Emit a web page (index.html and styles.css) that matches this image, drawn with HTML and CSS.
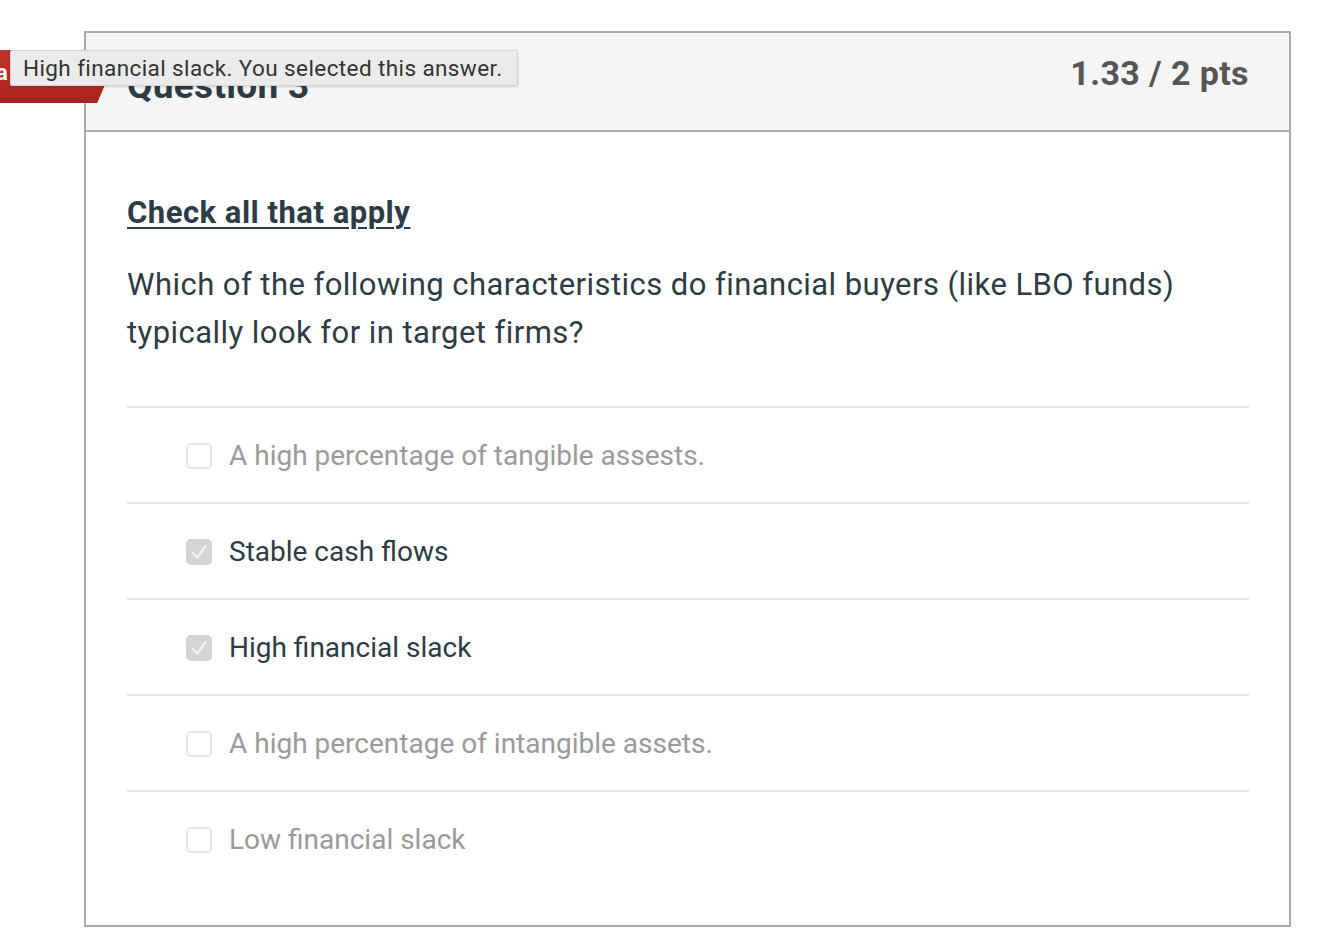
FILE: index.html
```html
<!DOCTYPE html>
<html>
<head>
<meta charset="utf-8">
<link rel="stylesheet" href="styles.css">
</head>
<body>
<div class="page">
  <div class="card">
    <div class="card-header">
      <h2 class="q-title">Question 3</h2>
      <div class="q-points">1.33 / 2 pts</div>
    </div>
    <div class="card-body">
      <p class="instruction">Check all that apply</p>
      <p class="q-text">Which of the following characteristics do financial buyers (like LBO funds) typically look for in target firms?</p>
      <ul class="answers">
        <li class="answer"><span class="box"></span><span class="label muted">A high percentage of tangible assests.</span></li>
        <li class="answer"><span class="box checked"><svg viewBox="0 0 26 26" width="26" height="26"><path d="M6.5 13.5 L11 18.5 L19.5 7.5" fill="none" stroke="#f2f2f2" stroke-width="2.6" stroke-linecap="round" stroke-linejoin="round"/></svg></span><span class="label">Stable cash flows</span></li>
        <li class="answer"><span class="box checked"><svg viewBox="0 0 26 26" width="26" height="26"><path d="M6.5 13.5 L11 18.5 L19.5 7.5" fill="none" stroke="#f2f2f2" stroke-width="2.6" stroke-linecap="round" stroke-linejoin="round"/></svg></span><span class="label">High financial slack</span></li>
        <li class="answer"><span class="box"></span><span class="label muted">A high percentage of intangible assets.</span></li>
        <li class="answer"><span class="box"></span><span class="label muted">Low financial slack</span></li>
      </ul>
    </div>
  </div>
  <div class="tag"><span class="tag-text">a</span></div>
  <div class="tooltip">High financial slack. You selected this answer.</div>
</div>
</body>
</html>
```
FILE: styles.css
```css
html, body {
  margin: 0;
  padding: 0;
  background: #ffffff;
}
body {
  font-family: Roboto, "Liberation Sans", Arial, sans-serif;
  color: #2d3b45;
}
.page {
  position: relative;
  width: 1342px;
  height: 934px;
  overflow: hidden;
  padding-top: 31px;
  box-sizing: border-box;
}
.card {
  margin-left: 84px;
  width: 1207px;
  height: 896px;
  box-sizing: border-box;
  border: 2px solid #a9a9a9;
  background: #ffffff;
}
.card-header {
  height: 99px;
  box-sizing: border-box;
  background: #f5f5f5;
  border-bottom: 2px solid #b0b0b0;
  display: flex;
  justify-content: space-between;
  align-items: flex-start;
  padding: 0 40px 0 41px;
}
.q-title {
  margin: 0;
  padding-top: 31px;
  font-size: 37px;
  font-weight: 700;
  line-height: 44px;
  letter-spacing: 0.3px;
  color: #2d3b45;
}
.q-points {
  padding-top: 20px;
  font-size: 34px;
  font-weight: 700;
  line-height: 40px;
  letter-spacing: 0.4px;
  color: #555555;
}
.card-body {
  padding: 0 40px 0 41px;
}
.instruction {
  margin: 0;
  padding-top: 61px;
  font-size: 31px;
  font-weight: 700;
  line-height: 40px;
  letter-spacing: 0.5px;
  text-decoration: underline;
  text-decoration-thickness: 2px;
  text-underline-offset: 4px;
  color: #2d3b45;
}
.q-text {
  margin: 28px 0 0 0;
  font-size: 31px;
  line-height: 48px;
  letter-spacing: 0.45px;
  color: #2d3b45;
}
.answers {
  list-style: none;
  margin: 49px 0 0 0;
  padding: 0;
}
.answer {
  height: 96px;
  box-sizing: border-box;
  border-top: 2px solid #e6e6e6;
  display: flex;
  align-items: center;
  padding-left: 59px;
  padding-top: 2px;
}
.box {
  width: 26px;
  height: 26px;
  box-sizing: border-box;
  border: 2px solid #e8e8e8;
  border-radius: 5px;
  background: #ffffff;
  margin-right: 17px;
  display: flex;
  align-items: center;
  justify-content: center;
}
.box.checked {
  background: #d4d4d4;
  border-color: #d4d4d4;
}
.box svg {
  display: block;
  flex: none;
}
.label {
  font-size: 28px;
  line-height: 34px;
  color: #2d3b45;
}
.label.muted {
  color: #9a9a9a;
}
.tag {
  position: absolute;
  left: 0;
  top: 50px;
  width: 120px;
  height: 53px;
  background: linear-gradient(#c0342c, #a8231d);
  clip-path: polygon(0 0, 100% 0, 81% 100%, 0 100%);
}
.tag-text {
  position: absolute;
  left: -4px;
  top: 10px;
  color: #ffffff;
  font-size: 22px;
  font-weight: 700;
}
.tooltip {
  position: absolute;
  left: 10px;
  top: 50px;
  width: 508px;
  height: 36px;
  box-sizing: border-box;
  background: #ebebeb;
  border: 1px solid #d2d2d2;
  border-radius: 2px;
  box-shadow: 0 1px 3px rgba(0,0,0,0.15);
  font-size: 22.5px;
  line-height: 34px;
  letter-spacing: 0.4px;
  padding-left: 12px;
  color: #333333;
  white-space: nowrap;
}
```
